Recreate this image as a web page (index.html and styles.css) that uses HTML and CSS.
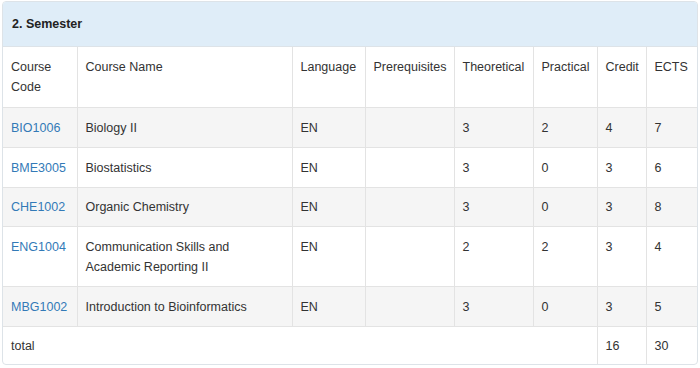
FILE: index.html
```html
<!DOCTYPE html>
<html lang="en">
<head>
<meta charset="utf-8">
<title>2. Semester</title>
<link rel="stylesheet" href="styles.css">
</head>
<body>
<div class="panel">
  <div class="panel-heading">2. Semester</div>
  <table class="courses">
    <colgroup>
      <col class="c-code"><col class="c-name"><col class="c-lang"><col class="c-pre">
      <col class="c-theo"><col class="c-prac"><col class="c-cred"><col class="c-ects">
    </colgroup>
    <thead>
      <tr>
        <th>Course Code</th><th>Course Name</th><th>Language</th><th>Prerequisites</th>
        <th>Theoretical</th><th>Practical</th><th>Credit</th><th>ECTS</th>
      </tr>
    </thead>
    <tbody>
      <tr class="odd"><td><a href="#">BIO1006</a></td><td>Biology II</td><td>EN</td><td></td><td>3</td><td>2</td><td>4</td><td>7</td></tr>
      <tr><td><a href="#">BME3005</a></td><td>Biostatistics</td><td>EN</td><td></td><td>3</td><td>0</td><td>3</td><td>6</td></tr>
      <tr class="odd"><td><a href="#">CHE1002</a></td><td>Organic Chemistry</td><td>EN</td><td></td><td>3</td><td>0</td><td>3</td><td>8</td></tr>
      <tr><td><a href="#">ENG1004</a></td><td>Communication Skills and Academic Reporting II</td><td>EN</td><td></td><td>2</td><td>2</td><td>3</td><td>4</td></tr>
      <tr class="odd"><td><a href="#">MBG1002</a></td><td>Introduction to Bioinformatics</td><td>EN</td><td></td><td>3</td><td>0</td><td>3</td><td>5</td></tr>
      <tr class="total"><td colspan="6">total</td><td>16</td><td>30</td></tr>
    </tbody>
  </table>
</div>
</body>
</html>
```
FILE: styles.css
```css
html, body {
  margin: 0;
  padding: 0;
  background: #ffffff;
}
body {
  padding: 1px 2px 0 2px;
  font-family: "Liberation Sans", Arial, Helvetica, sans-serif;
  font-size: 12.5px;
  color: #333333;
}
.panel {
  width: 694px;
  border: 1px solid #dde3e8;
  border-radius: 4px;
  overflow: hidden;
  background: #fff;
}
.panel-heading {
  height: 44px;
  line-height: 44px;
  padding: 0 9px;
  background: #dfedf8;
  border-bottom: 1px solid #dde3e8;
  font-weight: bold;
  color: #222;
}
.courses {
  width: 100%;
  border-collapse: collapse;
  table-layout: fixed;
}
.c-code { width: 74px; }
.c-name { width: 215px; }
.c-lang { width: 73px; }
.c-pre { width: 89px; }
.c-theo { width: 79px; }
.c-prac { width: 64px; }
.c-cred { width: 49px; }
.c-ects { width: auto; }
.courses th,
.courses td {
  padding: 9.75px 8px 9px 8px;
  line-height: 20px;
  text-align: left;
  vertical-align: top;
  font-weight: normal;
  border: 1px solid #e3e3e3;
}
.courses tr > :first-child { border-left: none; }
.courses tr > :last-child { border-right: none; }
.courses tr:last-child td { border-bottom: none; }
.courses thead th { border-top: none; padding-top: 10px; padding-bottom: 10px; }
.courses tr.total td { padding-top: 9px; padding-bottom: 8px; }
.courses tr.odd td { background: #f5f5f5; }
.courses a {
  color: #337ab7;
  text-decoration: none;
}
```
